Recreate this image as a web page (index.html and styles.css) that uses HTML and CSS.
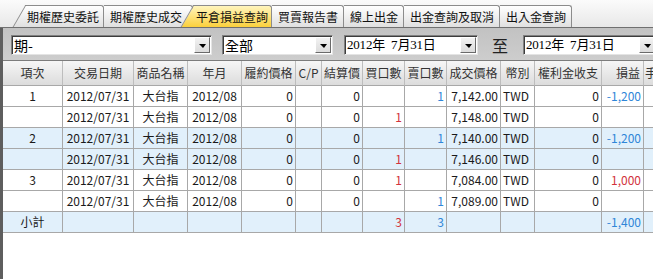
FILE: index.html
```html
<!DOCTYPE html>
<html lang="zh-Hant">
<head>
<meta charset="utf-8">
<title>平倉損益查詢</title>
<link rel="stylesheet" href="styles.css">
</head>
<body>
<div class="tabstrip">
  <div class="tab first">期權歷史委託</div>
  <div class="tab second">期權歷史成交</div>
  <div class="tab active">平倉損益查詢</div>
  <div class="tab">買賣報告書</div>
  <div class="tab">線上出金</div>
  <div class="tab">出金查詢及取消</div>
  <div class="tab">出入金查詢</div>
</div>
<div class="main">
  <div class="filters">
    <div class="combo c1"><span class="val">期-</span><span class="btn"></span></div>
    <div class="combo c2"><span class="val">全部</span><span class="btn"></span></div>
    <div class="combo c3 date"><span class="val">2012年&nbsp;&nbsp;7月31日</span><span class="btn"></span></div>
    <span class="to">至</span>
    <div class="combo c4 date"><span class="val">2012年&nbsp;&nbsp;7月31日</span><span class="btn"></span></div>
  </div>
  <div class="grid">
    <div class="row head">
      <div class="cell">項次</div><div class="cell">交易日期</div><div class="cell">商品名稱</div><div class="cell">年月</div><div class="cell">履約價格</div><div class="cell">C/P</div><div class="cell">結算價</div><div class="cell">買口數</div><div class="cell">賣口數</div><div class="cell">成交價格</div><div class="cell">幣別</div><div class="cell">權利金收支</div><div class="cell r">損益</div><div class="cell l">手續費</div>
    </div>
    <div class="row">
      <div class="cell c">1</div><div class="cell c">2012/07/31</div><div class="cell c">大台指</div><div class="cell c">2012/08</div><div class="cell r">0</div><div class="cell"></div><div class="cell r">0</div><div class="cell r"></div><div class="cell r blue">1</div><div class="cell r">7,142.00</div><div class="cell">TWD</div><div class="cell r">0</div><div class="cell r blue">-1,200</div><div class="cell"></div>
    </div>
    <div class="row">
      <div class="cell c"></div><div class="cell c">2012/07/31</div><div class="cell c">大台指</div><div class="cell c">2012/08</div><div class="cell r">0</div><div class="cell"></div><div class="cell r">0</div><div class="cell r red">1</div><div class="cell r"></div><div class="cell r">7,148.00</div><div class="cell">TWD</div><div class="cell r">0</div><div class="cell r"></div><div class="cell"></div>
    </div>
    <div class="row alt">
      <div class="cell c">2</div><div class="cell c">2012/07/31</div><div class="cell c">大台指</div><div class="cell c">2012/08</div><div class="cell r">0</div><div class="cell"></div><div class="cell r">0</div><div class="cell r"></div><div class="cell r blue">1</div><div class="cell r">7,140.00</div><div class="cell">TWD</div><div class="cell r">0</div><div class="cell r blue">-1,200</div><div class="cell"></div>
    </div>
    <div class="row alt">
      <div class="cell c"></div><div class="cell c">2012/07/31</div><div class="cell c">大台指</div><div class="cell c">2012/08</div><div class="cell r">0</div><div class="cell"></div><div class="cell r">0</div><div class="cell r red">1</div><div class="cell r"></div><div class="cell r">7,146.00</div><div class="cell">TWD</div><div class="cell r">0</div><div class="cell r"></div><div class="cell"></div>
    </div>
    <div class="row">
      <div class="cell c">3</div><div class="cell c">2012/07/31</div><div class="cell c">大台指</div><div class="cell c">2012/08</div><div class="cell r">0</div><div class="cell"></div><div class="cell r">0</div><div class="cell r red">1</div><div class="cell r"></div><div class="cell r">7,084.00</div><div class="cell">TWD</div><div class="cell r">0</div><div class="cell r red">1,000</div><div class="cell"></div>
    </div>
    <div class="row">
      <div class="cell c"></div><div class="cell c">2012/07/31</div><div class="cell c">大台指</div><div class="cell c">2012/08</div><div class="cell r">0</div><div class="cell"></div><div class="cell r">0</div><div class="cell r"></div><div class="cell r blue">1</div><div class="cell r">7,089.00</div><div class="cell">TWD</div><div class="cell r">0</div><div class="cell r"></div><div class="cell"></div>
    </div>
    <div class="row alt">
      <div class="cell c">小計</div><div class="cell"></div><div class="cell"></div><div class="cell"></div><div class="cell"></div><div class="cell"></div><div class="cell"></div><div class="cell r red">3</div><div class="cell r blue">3</div><div class="cell"></div><div class="cell"></div><div class="cell"></div><div class="cell r blue">-1,400</div><div class="cell"></div>
    </div>
  </div>
</div>
</body>
</html>
```
FILE: styles.css
```css
html, body {
  margin: 0;
  padding: 0;
}
body {
  width: 653px;
  height: 279px;
  overflow: hidden;
  background: #ffffff;
  font-family: "Noto Sans CJK TC", "Noto Sans", sans-serif;
  color: #1a1a1a;
}

/* ---------- tabs ---------- */
.tabstrip {
  height: 27px;
  border-bottom: 1px solid #707070;
  background: linear-gradient(#fbfbfb, #e8e8e8);
  display: flex;
  align-items: flex-end;
  padding-left: 25px;
}
.tab {
  position: relative;
  z-index: 1;
  height: 21px;
  line-height: 21px;
  font-size: 12px;
  padding: 0 5px 0 6px;
  border-top: 1px solid #8c8c8c;
  border-right: 1px solid #8c8c8c;
  border-top-right-radius: 3px;
  background: linear-gradient(#ffffff, #e0e0e0);
  color: #111;
  white-space: nowrap;
}
.tab.first {
  padding-left: 2px;
  padding-right: 4px;
}
.tab.second {
  padding-right: 10px;
}
.tab.active {
  z-index: 3;
  padding: 0 3px;
  background: linear-gradient(#fff5bd, #fbd03c);
}
.tab.first::before,
.tab.active::before {
  content: "";
  position: absolute;
  top: -1px;
  bottom: 0;
  left: -6px;
  width: 14px;
  background: inherit;
  border-left: 1px solid #8c8c8c;
  border-top: 1px solid #8c8c8c;
  transform: skewX(-30deg);
  z-index: -1;
}

/* ---------- main area ---------- */
.main {
  border-left: 3px solid #5e5e5e;
  height: 251px;
}
.filters {
  height: 25px;
  padding: 7px 0 0 8px;
  border-bottom: 1px solid #7c7c7c;
  background: linear-gradient(#c2c2c2, #cdcdcd);
  display: flex;
  align-items: flex-start;
}
.combo {
  box-sizing: border-box;
  height: 20px;
  flex: none;
  display: flex;
  align-items: center;
  background: #ffffff;
  border: 1px solid;
  border-color: #808080 #e4e4e4 #e4e4e4 #808080;
  box-shadow: inset 1px 1px 0 #3c3c3c;
  padding: 0 1px 0 2px;
}
.c1 { width: 201px; }
.c2 { width: 111px; margin-left: 10px; }
.c3 { width: 134px; margin-left: 11px; }
.c4 { width: 134px; margin-left: 15px; }
.val {
  flex: 1;
  min-width: 0;
  font-size: 14px;
  line-height: 18px;
  color: #000;
  white-space: nowrap;
}
.date .val {
  font-family: "Liberation Serif", "Noto Sans CJK TC", serif;
  font-size: 13px;
  letter-spacing: -0.2px;
}
.btn {
  box-sizing: border-box;
  width: 16px;
  height: 16px;
  flex: none;
  background: linear-gradient(#f2f2f2, #dcdcdc);
  border: 1px solid;
  border-color: #ffffff #6a6a6a #6a6a6a #ffffff;
  display: flex;
  align-items: center;
  justify-content: center;
}
.btn::after {
  content: "";
  width: 0;
  height: 0;
  border-left: 4px solid transparent;
  border-right: 3px solid transparent;
  border-top: 4px solid #000;
  margin-top: 1px;
}
.to {
  margin-left: 14px;
  width: 16px;
  font-size: 16px;
  line-height: 20px;
  color: #222;
  flex: none;
}

/* ---------- grid ---------- */
.row {
  display: grid;
  grid-template-columns: 60px 71px 54px 54px 54px 26px 41px 42px 42px 54px 34px 67px 42px 42px;
}
.cell {
  box-sizing: border-box;
  height: 21px;
  line-height: 20px;
  padding: 0 2px;
  font-size: 12px;
  white-space: nowrap;
  overflow: hidden;
  border-right: 1px solid #a8a8a8;
  border-bottom: 1px solid #a8a8a8;
}
.head .cell {
  height: 25px;
  line-height: 24px;
  text-align: center;
  color: #333;
  background: linear-gradient(#f6f6f6, #dcdcdc);
  border-right-color: #bdbdbd;
  border-bottom-color: #a8a8a8;
}
.head .cell.r { text-align: right; padding-right: 3px; }
.head .cell.l { text-align: left; padding-left: 1px; }
.alt .cell { background: #e1f0fb; }
.c { text-align: center; }
.r { text-align: right; }
.blue { color: #2f86d8; }
.red { color: #d2323c; }
```
